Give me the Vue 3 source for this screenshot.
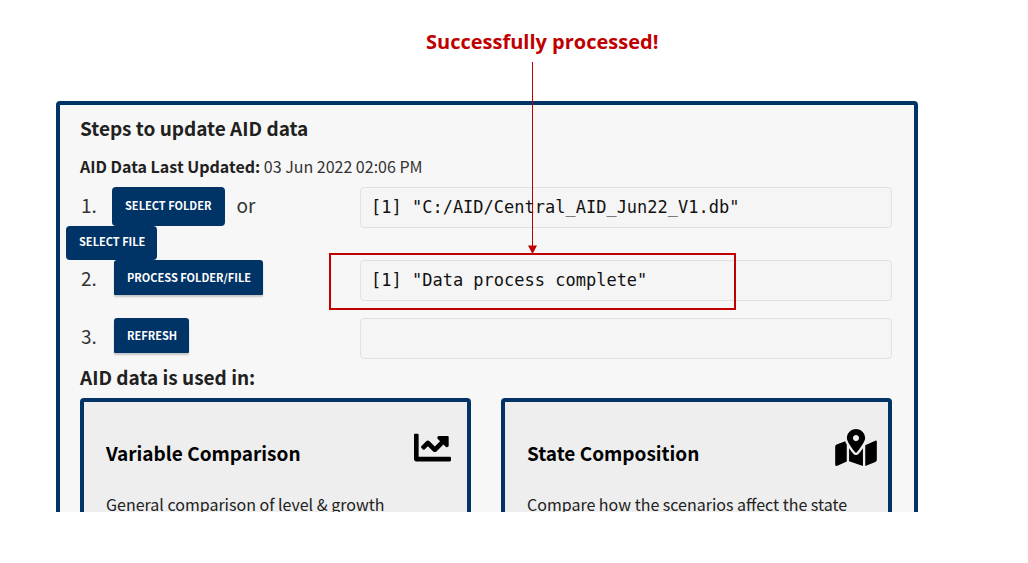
<script setup>
const cards = [
  { title: 'Variable Comparison', text: 'General comparison of level & growth', icon: 'chart' },
  { title: 'State Composition', text: 'Compare how the scenarios affect the state', icon: 'map' },
]
</script>

<template>
  <div class="page">
    <p class="callout">Successfully processed!</p>
    <svg class="arrow" width="12" height="192" viewBox="0 0 12 192" aria-hidden="true">
      <path d="M6.5 0V184" stroke="#c00000" stroke-width="1" fill="none" />
      <path d="M2 183.500H11L6.500 192Z" fill="#c00000" />
    </svg>
    <div class="highlight" aria-hidden="true"></div>

    <main class="viewport">
      <section class="panel">
        <h2>Steps to update AID data</h2>
        <p class="updated"><strong>AID Data Last Updated:</strong> 03 Jun 2022 02:06 PM</p>

        <div class="step first">
          <div class="controls">
            <div class="line">
              <span class="num">1.</span>
              <button type="button" class="tall">SELECT FOLDER</button>
              <span class="or">or</span>
            </div>
            <button type="button" class="file">SELECT FILE</button>
          </div>
          <output>[1] "C:/AID/Central_AID_Jun22_V1.db"</output>
        </div>
        <div class="step">
          <div class="line inset">
            <span class="num">2.</span>
            <button type="button" class="raised">PROCESS FOLDER/FILE</button>
          </div>
          <output>[1] "Data process complete"</output>
        </div>
        <div class="step">
          <div class="line inset">
            <span class="num">3.</span>
            <button type="button" class="raised">REFRESH</button>
          </div>
          <output></output>
        </div>

        <h2 class="used">AID data is used in:</h2>
        <div class="cards">
          <article v-for="card in cards" :key="card.title" class="card">
            <header>
              <h3>{{ card.title }}</h3>
              <svg v-if="card.icon === 'chart'" width="37" height="37" viewBox="0 0 512 512" aria-hidden="true">
                <path d="M496 384H64V80c0-8.840-7.160-16-16-16H16C7.160 64 0 71.160 0 80v336c0 17.670 14.330 32 32 32h464c8.840 0 16-7.160 16-16v-32c0-8.840-7.160-16-16-16zM464 96H345.940c-21.380 0-32.090 25.850-16.970 40.970l32.400 32.400L288 242.750l-73.370-73.370c-12.500-12.500-32.760-12.500-45.250 0l-68.690 68.690c-6.250 6.250-6.250 16.380 0 22.630l22.620 22.620c6.250 6.250 16.380 6.250 22.630 0L192 237.250l73.370 73.370c12.500 12.500 32.760 12.500 45.250 0l96-96 32.400 32.400c15.120 15.120 40.970 4.410 40.970-16.970V112c.010-8.840-7.150-16-15.990-16z" />
              </svg>
              <svg v-else class="map" width="42" height="37" viewBox="0 0 576 512" aria-hidden="true">
                <path d="M288 0c-69.590 0-126 56.410-126 126 0 56.260 82.350 158.800 113.900 196.020 6.390 7.540 17.820 7.540 24.200 0C331.650 284.800 414 182.260 414 126 414 56.410 357.590 0 288 0zm0 168c-23.200 0-42-18.800-42-42s18.800-42 42-42 42 18.800 42 42-18.800 42-42 42zM20.120 215.950A32.006 32.006 0 0 0 0 245.660v250.320c0 11.320 11.430 19.060 21.940 14.860L160 448V214.920c-8.840-15.980-16.070-31.540-21.250-46.420L20.120 215.950zM288 359.670c-14.070 0-27.380-6.180-36.510-16.960-19.660-23.200-40.570-49.620-59.490-76.720v182l192 64V266c-18.920 27.090-39.820 53.520-59.490 76.720-9.130 10.770-22.440 16.950-36.510 16.950zm266.060-198.510L416 224v288l139.880-55.950A31.996 31.996 0 0 0 576 426.340V176.020c0-11.320-11.430-19.060-21.940-14.860z" />
              </svg>
            </header>
            <p>{{ card.text }}</p>
          </article>
        </div>
      </section>
    </main>
  </div>
</template>

<style>
body {
  background: #fff;
}
</style>

<style scoped>
.page {
  position: relative;
  padding: 28px 110px 0 56px;
  font-family: "Noto Sans CJK SC", "Open Sans", sans-serif;
  color: #333;
}
.page * {
  box-sizing: border-box;
}
h2, h3, p {
  margin: 0;
}
.callout {
  padding-left: 370px;
  height: 73px;
  font: 700 20px/28px "Open Sans", sans-serif;
  color: #c00000;
  white-space: nowrap;
}
.arrow {
  position: absolute;
  left: 526px;
  top: 62px;
  z-index: 2;
}
.highlight {
  position: absolute;
  left: 329px;
  top: 253px;
  width: 407px;
  height: 57px;
  border: 2px solid #c00000;
  z-index: 1;
}
.viewport {
  max-height: 411px;
  overflow: hidden;
}
.panel {
  border: 4px solid #003366;
  border-radius: 4px;
  background: #f7f7f7;
  padding: 9px 22px 24px 20px;
}
h2 {
  font-size: 19px;
  line-height: 28px;
  font-weight: 700;
  color: #212121;
}
.updated {
  margin: 12px 0 9px;
  font-size: 16px;
  line-height: 24px;
}
.updated strong {
  color: #212121;
}
.step {
  display: grid;
  grid-template-columns: 280px 1fr;
  align-items: start;
  height: 58px;
}
.step.first {
  height: 73px;
}
.line {
  display: flex;
  align-items: center;
  height: 35px;
}
.first .line {
  height: 39px;
}
.num {
  width: 32px;
  padding-left: 1px;
  font-size: 19px;
  line-height: 28px;
}
.first .num,
.or {
  padding-bottom: 4px;
}
.inset .num {
  width: 34px;
}
.or {
  margin-left: 11px;
  font-size: 19px;
  line-height: 28px;
}
button {
  border: 0;
  border-radius: 4px;
  padding: 0 12px 4px 13px;
  height: 34px;
  background: #003366;
  color: #fff;
  font-family: inherit;
  font-size: 11px;
  line-height: 16px;
  font-weight: 700;
  white-space: nowrap;
}
.tall {
  height: 39px;
  padding-right: 14px;
}
.file {
  display: block;
  margin-left: -14px;
}
.raised {
  height: 35px;
  padding-bottom: 2px;
  border-radius: 3px 3px 1px 1px;
  box-shadow: 0 2px 2px rgba(0, 0, 0, 0.2);
}
output {
  display: block;
  height: 41px;
  padding: 0 10px;
  border: 1px solid #dee2e6;
  border-radius: 4px;
  background: #f5f5f5;
  font: 17px/39px "DejaVu Sans Mono", "Liberation Mono", monospace;
  color: #111;
  white-space: pre;
}
.used {
  margin: -13px 0 7px;
}
.cards {
  display: grid;
  grid-template-columns: 1fr 1fr;
  gap: 30px;
}
.card {
  border: 4px solid #003366;
  border-radius: 4px;
  background: #eee;
  padding: 27px 16px 24px 22px;
  color: #000;
}
.card header {
  display: flex;
  justify-content: space-between;
  height: 63px;
}
.card .map {
  margin-right: -5px;
}
h3 {
  padding-top: 10px;
  font-size: 19px;
  line-height: 28px;
}
.card p {
  font-size: 16px;
  line-height: 24px;
  white-space: nowrap;
  color: #212121;
}
</style>
